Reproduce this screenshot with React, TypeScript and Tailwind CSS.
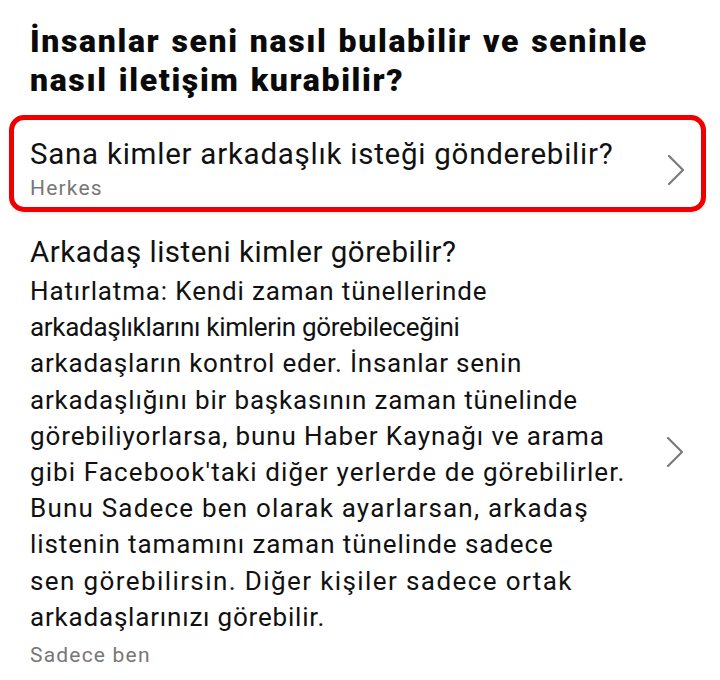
import React from "react";

function Chevron({ className = "" }: { className?: string }) {
  return (
    <svg width="18" height="32" viewBox="0 0 18 32" fill="none" className={"shrink-0 " + className}>
      <path d="M2 2 L16 16 L2 30" stroke="#7a7a7a" strokeWidth="2.2" strokeLinecap="round" strokeLinejoin="round" />
    </svg>
  );
}

const bodyLines: { text: string; cls: string }[] = [
  { text: "Hatırlatma: Kendi zaman tünellerinde", cls: "tracking-[0.85px]" },
  { text: "arkadaşlıklarını kimlerin görebileceğini", cls: "tracking-[-0.3px]" },
  { text: "arkadaşların kontrol eder. İnsanlar senin", cls: "tracking-[0.78px]" },
  { text: "arkadaşlığını bir başkasının zaman tünelinde", cls: "tracking-[0.82px]" },
  { text: "görebiliyorlarsa, bunu Haber Kaynağı ve arama", cls: "tracking-[0.89px]" },
  { text: "gibi Facebook'taki diğer yerlerde de görebilirler.", cls: "tracking-[1.1px]" },
  { text: "Bunu Sadece ben olarak ayarlarsan, arkadaş", cls: "tracking-[1.2px]" },
  { text: "listenin tamamını zaman tünelinde sadece", cls: "tracking-[0.92px]" },
  { text: "sen görebilirsin. Diğer kişiler sadece ortak", cls: "tracking-[1.4px]" },
  { text: "arkadaşlarınızı görebilir.", cls: "tracking-[0.8px]" },
];

export default function App() {
  return (
    <div className="w-[720px] h-[680px] bg-white overflow-hidden" style={{ fontFamily: "Roboto, 'Noto Sans', sans-serif" }}>
      <div className="pt-[22px] pl-[30px]">
        <h1 className="text-[32px] leading-[39px] font-black text-[#0a0a0a] whitespace-nowrap">
          <span className="block tracking-[1.65px] [word-spacing:1.5px]">İnsanlar seni nasıl bulabilir ve seninle</span>
          <span className="block tracking-[1.65px] [word-spacing:1.5px]">nasıl iletişim kurabilir?</span>
        </h1>
      </div>
      <div className="ml-[9px] mr-[14px] mt-[15px] h-[97px] border-[5px] border-[#ee0000] rounded-[15px] flex items-center pl-[16px] pr-[16px] shadow-[0_2px_2px_rgba(0,0,0,0.08)]">
        <div className="flex-1 self-start pt-[16px]">
          <div className="text-[29.5px] leading-[36px] text-[#111111] tracking-[0.75px] whitespace-nowrap">Sana kimler arkadaşlık isteği gönderebilir?</div>
          <div className="mt-[2px] text-[21px] leading-[28px] text-[#777777] tracking-[1.2px]">Herkes</div>
        </div>
        <Chevron className="mt-[12px]" />
      </div>
      <div className="flex items-center pl-[30px] pr-[36px] mt-[22px]">
        <div className="flex-1">
          <div className="text-[29.5px] leading-[36px] text-[#111111] tracking-[0.5px] whitespace-nowrap">Arkadaş listeni kimler görebilir?</div>
          <div className="mt-[3px] text-[26px] leading-[36.2px] text-[#111111] whitespace-nowrap">
            {bodyLines.map((l, i) => (
              <div key={i} className={l.cls}>
                {l.text}
              </div>
            ))}
          </div>
          <div className="mt-[6px] text-[21px] leading-[28px] text-[#777777] tracking-[1.2px]">Sadece ben</div>
        </div>
        <Chevron />
      </div>
    </div>
  );
}
